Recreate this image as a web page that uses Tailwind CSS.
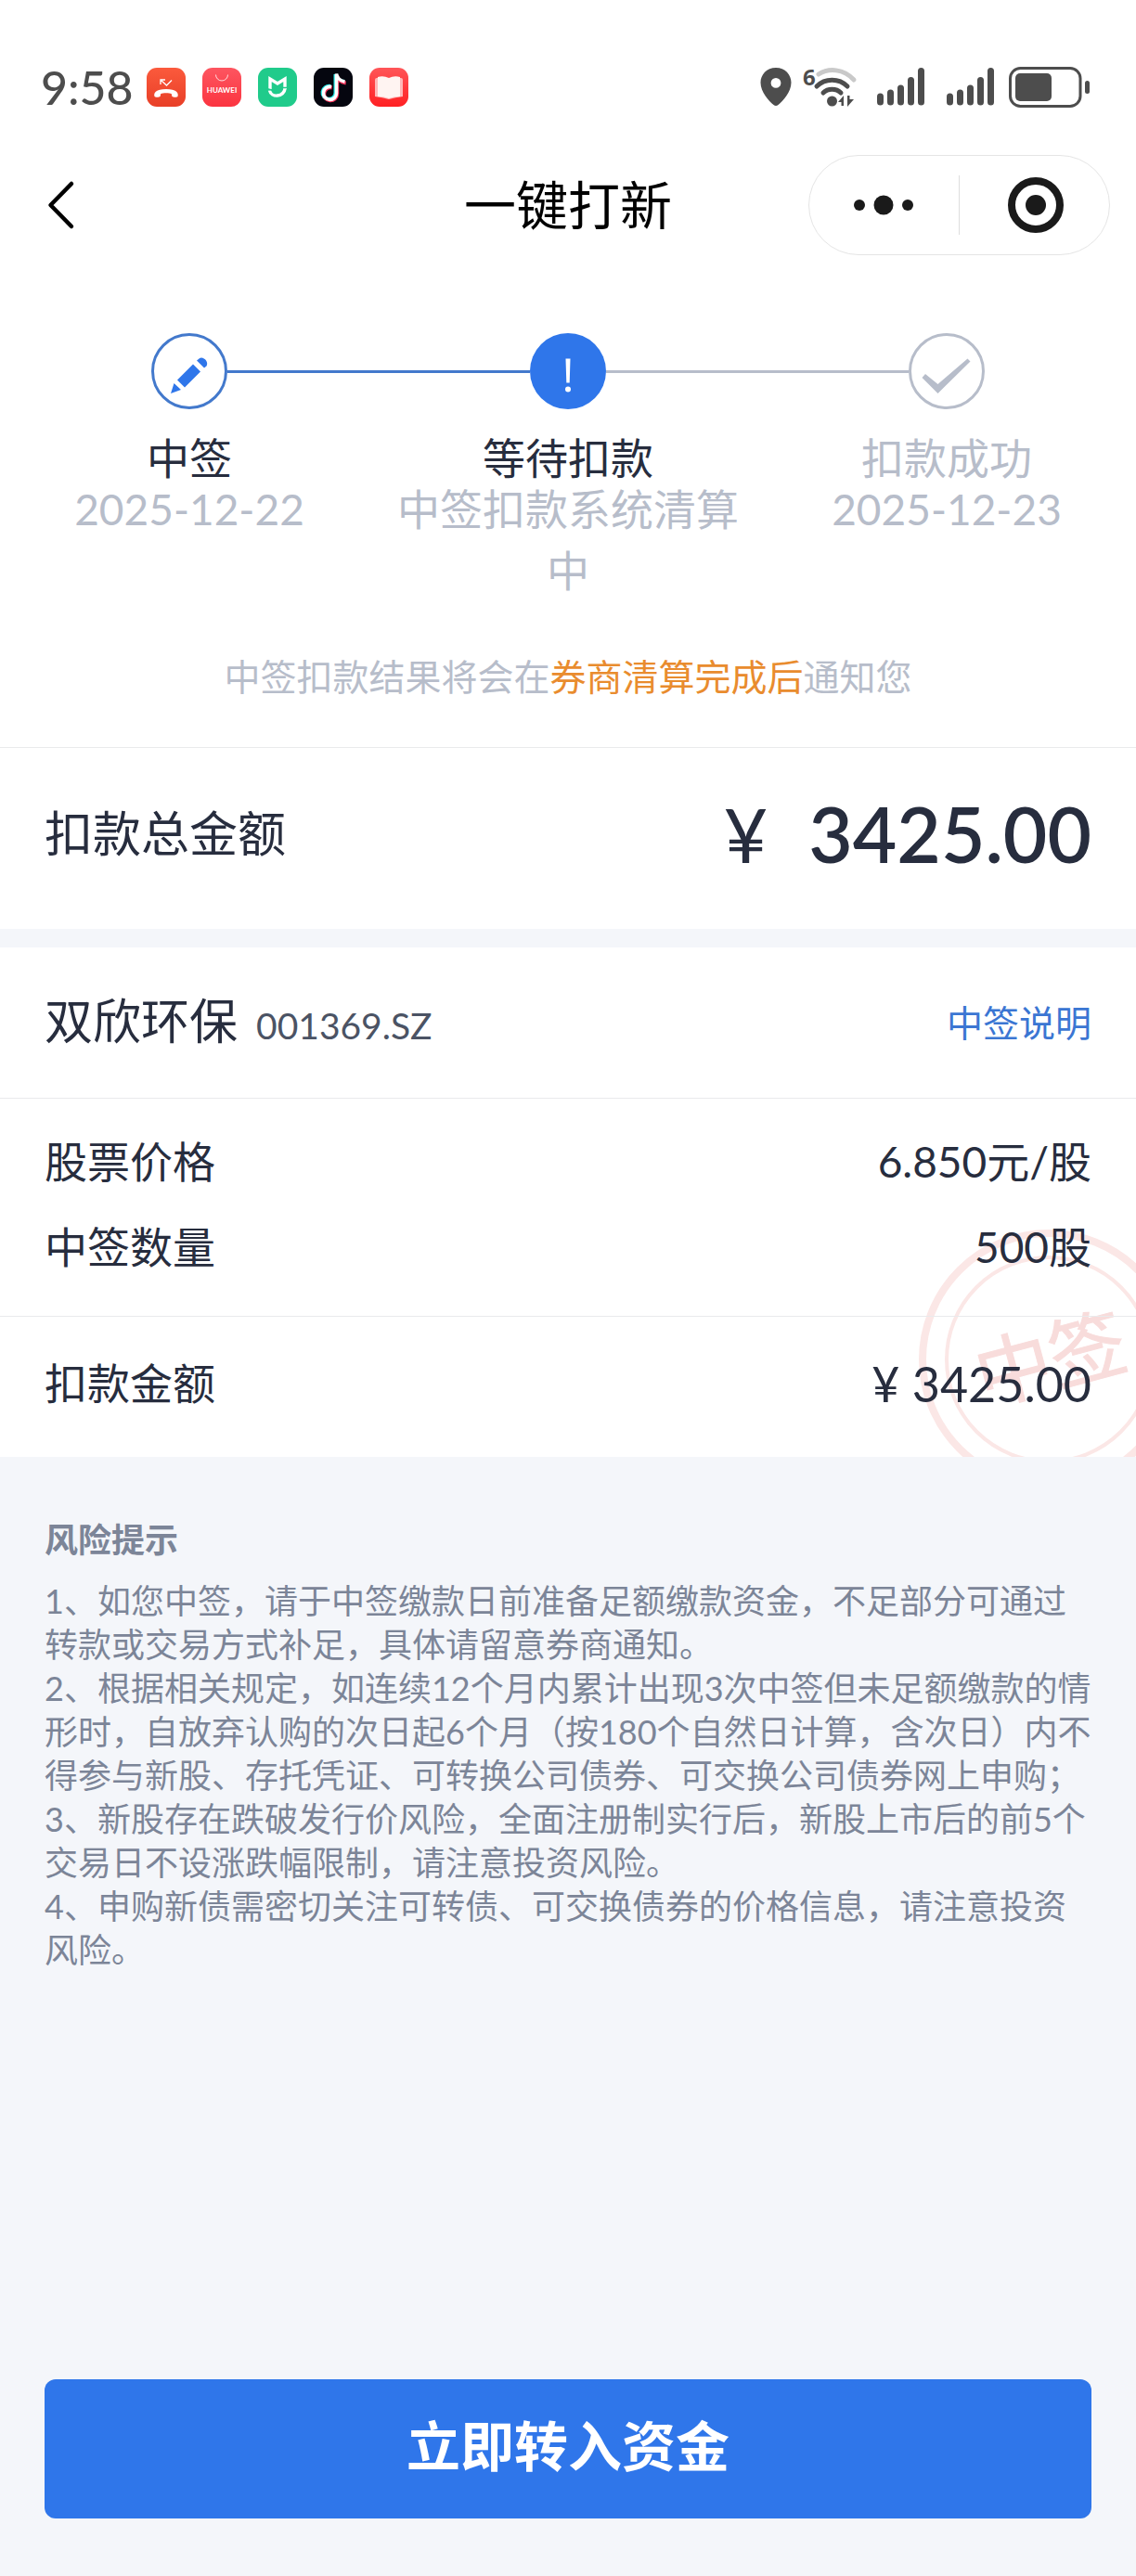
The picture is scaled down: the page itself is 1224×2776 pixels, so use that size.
<!DOCTYPE html>
<html lang="zh-CN">
<head>
<meta charset="utf-8">
<meta name="viewport" content="width=device-width, initial-scale=1">
<title>一键打新</title>
<script src="https://cdn.jsdelivr.net/npm/@tailwindcss/browser@4"></script>
</head>
<body class="flex min-h-screen flex-col bg-[#f4f6fa] font-['Lato','Noto_Sans_CJK_SC',sans-serif] text-[46px] text-[#272d3e]">

<div class="bg-white">
  <!-- Status bar -->
  <div class="flex items-center justify-between px-11 pt-[73px] text-[#4d4d4d]">
    <div class="flex h-[42px] items-center gap-[18px]">
      <span class="-mr-1 text-[50px] leading-none font-medium">9:58</span>
      <svg class="size-[42px]" viewBox="0 0 42 42" aria-label="未接来电">
        <defs><linearGradient id="call" x1="0" y1="0" x2="0" y2="1"><stop stop-color="#fb5a3c"/><stop offset="1" stop-color="#e83f27"/></linearGradient></defs>
        <rect width="42" height="42" rx="11" fill="url(#call)"/>
        <path d="M15 18v-5h5M15.500 13.500l6 5.500 5.500-5.500" fill="none" stroke="#fff" stroke-width="1.300"/>
        <path d="M8.500 31c-1.200-4 1.500-8 12.500-8s13.700 4 12.500 8c-.4 1-5 1-6 0-.6-1-.3-2.600-.9-3.100-1.600-1-9.600-1-11.200 0-.6.5-.3 2.100-.9 3.100-1 1-5.600 1-6 0z" fill="#fff"/>
      </svg>
      <svg class="size-[42px]" viewBox="0 0 42 42" aria-label="HUAWEI">
        <defs><linearGradient id="hw" x1="0" y1="0" x2="0" y2="1"><stop stop-color="#fd5560"/><stop offset="1" stop-color="#fb3440"/></linearGradient></defs>
        <rect width="42" height="42" rx="11" fill="url(#hw)"/>
        <path d="M14.500 7.500a6.500 6.500 0 0 0 13 0" fill="none" stroke="#fff" stroke-opacity=".8" stroke-width="1"/>
        <text x="21" y="27" text-anchor="middle" font-size="8" font-weight="700" fill="#fff">HUAWEI</text>
      </svg>
      <svg class="size-[42px]" viewBox="0 0 42 42" aria-label="米家">
        <rect width="42" height="42" rx="11" fill="#20cb8b"/>
        <path d="M13 23V12l8 5 8-5v11" fill="none" stroke="#fff" stroke-width="3.400"/>
        <path d="M12.500 24.500c1.500 7.500 15 8.500 17-3.500" fill="none" stroke="#fff" stroke-width="3.400"/>
        <path d="M9 22.500l8 2M23 21.500h9" stroke="#20cb8b" stroke-width="1.500"/>
      </svg>
      <svg class="size-[42px]" viewBox="0 0 42 42" aria-label="抖音">
        <rect width="42" height="42" rx="11" fill="#05060f"/>
        <g fill="none" stroke-width="4">
          <path d="M18 20a7 7 0 1 0 5.500 7V7c.8 4.500 4 7.300 9.500 8" stroke="#25e8e8"/>
          <path d="M20.500 21.500a7 7 0 1 0 5.500 7V8.500c.8 4.500 4 7.300 9.500 8" stroke="#f7355c" transform="translate(-.8 0)"/>
          <path d="M19 20.500a7 7 0 1 0 5.500 7V6.500c.8 4.500 4 7.600 9 8.500" stroke="#fff" stroke-width="3.600"/>
        </g>
      </svg>
      <svg class="size-[42px]" viewBox="0 0 42 42" aria-label="阅读">
        <defs><linearGradient id="bk" x1="0" y1="0" x2="0" y2="1"><stop stop-color="#ff5558"/><stop offset="1" stop-color="#ff2023"/></linearGradient></defs>
        <rect width="42" height="42" rx="11" fill="url(#bk)"/>
        <path d="M6 13q0-2 2-2h26q2 0 2 2v18q-8 1-15 3-7-2-15-3z" fill="#ffb9b9"/>
        <path d="M9 10q6-2 12 1 6-3 12-1v21q-7 0-12 2-5-2-12-2z" fill="#fff4f2"/>
      </svg>
    </div>
    <div class="mr-1.5 flex h-[42px] items-center">
      <svg class="mr-3 h-[42px] w-[34px]" viewBox="0 0 34 42" fill="currentColor" aria-label="定位"><path fill-rule="evenodd" d="M17 0C7 0 .5 7.500.5 16c0 10 9 20 14 24 1.600 1.200 3.400 1.200 5 0 5-4 14-14 14-24C33.500 7.500 27 0 17 0zm0 11a5.400 5.400 0 1 1 0 10.800A5.400 5.400 0 0 1 17 11z"/></svg>
      <svg class="mr-5 h-11 w-[60px] overflow-visible" viewBox="0 0 60 44" aria-label="无线网络">
        <text x="0" y="20" font-family="Open Sans, sans-serif" font-weight="700" font-size="24" fill="currentColor">6</text>
        <g fill="none" stroke="currentColor" stroke-width="5" stroke-linecap="round">
          <path d="M17 8c11-7 27-6 38 6" stroke="#c9c9c9" />
          <path d="M15 21c9-9 24-9 33 0"/><path d="M22 28c5-5 14-5 19 0"/>
        </g>
        <circle cx="31.500" cy="37" r="5.500" fill="currentColor"/>
        <path d="M38 38l6-7v11h-2.500v-4zM48 31h2.500v4H55l-7 8z" fill="currentColor"/>
      </svg>
      <svg class="mr-6 h-[42px] w-[51px]" viewBox="0 0 51 42" stroke="currentColor" stroke-width="7" stroke-linecap="round" aria-label="信号"><path d="M3.500 31v6M14.500 27v10M25.500 22v15M36.500 13.500V37M47.500 3.500V37"/></svg>
      <svg class="mr-4 h-[42px] w-[51px]" viewBox="0 0 51 42" stroke="currentColor" stroke-width="7" stroke-linecap="round" aria-label="信号"><path d="M3.500 31v6M14.500 27v10M25.500 22v15M36.500 13.500V37M47.500 3.500V37"/></svg>
      <svg class="h-11 w-[87px]" viewBox="0 0 87 44" fill="currentColor" aria-label="电池"><rect x="1.500" y="1.500" width="75.500" height="41" rx="11" fill="none" stroke="currentColor" stroke-width="3"/><rect x="7" y="7" width="39" height="30" rx="5"/><rect x="82" y="15" width="5" height="14" rx="2.500"/></svg>
    </div>
  </div>

  <!-- Title bar -->
  <header class="mt-[52px] grid grid-cols-[1fr_auto_1fr] items-center px-7 text-black">
    <button type="button" aria-label="返回" class="ml-5 justify-self-start">
      <svg class="h-14 w-9" viewBox="0 0 36 56" fill="none" stroke="currentColor" stroke-width="4.500" stroke-linecap="round" stroke-linejoin="round"><path d="M29 5 6.500 28 29 51"/></svg>
    </button>
    <h1 class="text-[56px] leading-[60px]">一键打新</h1>
    <div class="flex h-[108px] w-[325px] items-center justify-self-end rounded-full border border-[#e5e5e5] text-[#1a1a1a]">
      <button type="button" aria-label="更多" class="flex h-16 w-1/2 items-center justify-center border-r border-[#dedede]">
        <svg class="h-6 w-16" viewBox="0 0 64 24" fill="currentColor"><circle cx="6" cy="12" r="6"/><circle cx="32" cy="12" r="10.500"/><circle cx="58" cy="12" r="6"/></svg>
      </button>
      <button type="button" aria-label="关闭" class="flex h-16 w-1/2 items-center justify-center pl-1">
        <svg class="size-[60px]" viewBox="0 0 60 60"><circle cx="30" cy="30" r="26" fill="none" stroke="currentColor" stroke-width="8"/><circle cx="30" cy="30" r="11" fill="currentColor"/></svg>
      </button>
    </div>
  </header>

  <!-- Progress -->
  <ol class="mt-[84px] grid grid-cols-3 text-center text-[#b7bdca]">
    <li>
      <div class="flex items-center">
        <span class="flex-1"></span>
        <svg class="size-[82px]" viewBox="0 0 82 82"><circle cx="41" cy="41" r="39.500" fill="#fff" stroke="#4379cc" stroke-width="3"/><path fill="#2f76ea" d="M21 65l3.500-11 7.500 7zM28 50.500l17-17 8 8-17 17zM49 29.500l2.500-2c4-3.500 11 3.500 8 8l-2.500 2z"/></svg>
        <span class="h-[3px] flex-1 bg-[#4379cc]"></span>
      </div>
      <p class="mt-[31px] leading-[44px] text-[#272d3e]">中签</p>
      <p class="leading-[66px]">2025-12-22</p>
    </li>
    <li>
      <div class="flex items-center">
        <span class="h-[3px] flex-1 bg-[#4379cc]"></span>
        <svg class="size-[82px]" viewBox="0 0 82 82"><circle cx="41" cy="41" r="41" fill="#2f76ea"/><path d="M38.500 27.500h5l-.8 26h-3.400z" fill="#fff"/><circle cx="41" cy="60.500" r="3" fill="#fff"/></svg>
        <span class="h-[3px] flex-1 bg-[#b7bdca]"></span>
      </div>
      <p class="mt-[31px] leading-[44px] text-[#272d3e]">等待扣款</p>
      <p class="px-5 leading-[66px]">中签扣款系统清算中</p>
    </li>
    <li>
      <div class="flex items-center">
        <span class="h-[3px] flex-1 bg-[#b7bdca]"></span>
        <svg class="size-[82px]" viewBox="0 0 82 82"><circle cx="41" cy="41" r="39.500" fill="#fff" stroke="#b7bdca" stroke-width="3"/><path d="M14.500 48l3.500-4 13.500 11L63.500 27.500l3 3L31.500 65z" fill="#b7bdca"/></svg>
        <span class="flex-1"></span>
      </div>
      <p class="mt-[31px] leading-[44px]">扣款成功</p>
      <p class="leading-[66px]">2025-12-23</p>
    </li>
  </ol>
  <p class="mt-[57px] pb-[52px] text-center text-[39px] leading-[48px] text-[#b7bdca]">中签扣款结果将会在<span class="text-[#e98c2e]">券商清算完成后</span>通知您</p>

  <!-- Total -->
  <div class="flex items-center justify-between border-t border-[#e9eaec] px-12 pt-[42px] pb-[53px] leading-[100px]">
    <span class="text-[52px]">扣款总金额</span>
    <span class="flex gap-11 text-[82px]"><span>¥</span><span class="font-semibold">3425.00</span></span>
  </div>
</div>

<!-- Stock detail -->
<section class="relative isolate mt-5 overflow-hidden bg-white">
  <svg class="absolute -right-[46px] -bottom-[35px] -z-10 size-[280px]" viewBox="0 0 280 280" aria-hidden="true">
    <circle cx="140" cy="140" r="136" fill="none" stroke="#fbe7e6" stroke-width="8"/>
    <circle cx="140" cy="140" r="110" fill="none" stroke="#fbe7e6" stroke-width="4"/>
    <text x="142" y="170" text-anchor="middle" font-size="82" fill="#f8dcdb" stroke="#f8dcdb" transform="rotate(-15 140 140)">中签</text>
  </svg>
  <div class="flex h-[162px] items-center justify-between px-12">
    <h2 class="flex items-baseline gap-5 text-[52px] leading-[68px]">双欣环保<span class="text-[39px] text-[#4b5364]">001369.SZ</span></h2>
    <a href="#" class="text-[39px] text-[#3b76d3]">中签说明</a>
  </div>
  <dl class="border-t border-[#e9eaec] px-12 pt-[22px] pb-7 leading-[92px]">
    <div class="flex justify-between"><dt>股票价格</dt><dd>6.850元/股</dd></div>
    <div class="flex justify-between"><dt>中签数量</dt><dd>500股</dd></div>
  </dl>
  <dl class="border-t border-[#e9eaec] px-12 pb-[7px] leading-[144px]">
    <div class="flex justify-between"><dt>扣款金额</dt><dd class="text-[52px]">¥ 3425.00</dd></div>
  </dl>
</section>

<!-- Risk notice -->
<section class="px-12 pt-[65px] text-[36px] text-[#7c8598]">
  <h2 class="leading-[48px] font-bold">风险提示</h2>
  <div class="mt-[19px] leading-[47px]">
    <p>1、如您中签，请于中签缴款日前准备足额缴款资金，不足部分可通过转款或交易方式补足，具体请留意券商通知。</p>
    <p>2、根据相关规定，如连续12个月内累计出现3次中签但未足额缴款的情形时，自放弃认购的次日起6个月（按180个自然日计算，含次日）内不得参与新股、存托凭证、可转换公司债券、可交换公司债券网上申购；</p>
    <p>3、新股存在跌破发行价风险，全面注册制实行后，新股上市后的前5个交易日不设涨跌幅限制，请注意投资风险。</p>
    <p>4、申购新债需密切关注可转债、可交换债券的价格信息，请注意投资风险。</p>
  </div>
</section>

<footer class="mt-auto px-12 pt-12 pb-[62px]">
  <button type="button" class="h-[150px] w-full rounded-xl bg-[#2f76ea] pb-2 text-[58px] font-bold text-white">立即转入资金</button>
</footer>
</body>
</html>
